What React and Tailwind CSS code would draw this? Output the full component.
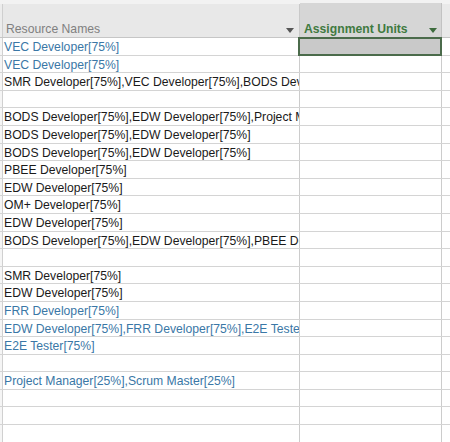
const rows = [
  { t: "VEC Developer[75%]", b: true },
  { t: "VEC Developer[75%]", b: true },
  { t: "SMR Developer[75%],VEC Developer[75%],BODS Developer[75%]" },
  { t: "" },
  { t: "BODS Developer[75%],EDW Developer[75%],Project Manager[25%]" },
  { t: "BODS Developer[75%],EDW Developer[75%]" },
  { t: "BODS Developer[75%],EDW Developer[75%]" },
  { t: "PBEE Developer[75%]" },
  { t: "EDW Developer[75%]" },
  { t: "OM+ Developer[75%]" },
  { t: "EDW Developer[75%]" },
  { t: "BODS Developer[75%],EDW Developer[75%],PBEE Developer[75%]" },
  { t: "" },
  { t: "SMR Developer[75%]" },
  { t: "EDW Developer[75%]" },
  { t: "FRR Developer[75%]", b: true },
  { t: "EDW Developer[75%],FRR Developer[75%],E2E Tester[75%]", b: true },
  { t: "E2E Tester[75%]", b: true },
  { t: "" },
  { t: "Project Manager[25%],Scrum Master[25%]", b: true },
  { t: "" },
  { t: "" },
  { t: "" },
];

function Tri({ color }) {
  return (
    <svg width="8" height="5" viewBox="0 0 8 5" className="shrink-0">
      <polygon points="0,0 8,0 4,5" fill={color} />
    </svg>
  );
}

export default function App() {
  return (
    <div
      className="w-[450px] h-[442px] overflow-hidden bg-white text-[12.2px]"
      style={{ fontFamily: '"Liberation Sans", Arial, sans-serif' }}
    >
      <div className="grid grid-cols-[3px_297px_142px_1fr] h-[38px] bg-[#f2f2f2] border-b border-[#c6c6c6]">
        <div className="border-r border-[#cfcfcf] bg-[#ececec] mt-[4px]" />
        <div className="flex items-end justify-between bg-[#e8e8e8] mt-[4px] pl-[3px] pr-[5px] pb-[1px] border-r border-[#c9c9c9]">
          <span className="text-[#808080] leading-[14px]">Resource Names</span>
          <div className="mb-[3px]"><Tri color="#555555" /></div>
        </div>
        <div className="flex items-end justify-between bg-[#d6d6d6] mt-[3px] pl-[4px] pr-[4px] pb-[1px] border-r border-[#c2c2c2]">
          <span className="text-[#3f7a3f] font-bold leading-[14px]">Assignment Units</span>
          <div className="mb-[3px]"><Tri color="#3d6b3d" /></div>
        </div>
        <div className="bg-[#e9e9e9] mt-[4px]" />
      </div>
      {rows.map((r, i) => (
        <div
          key={i}
          className="grid grid-cols-[3px_297px_142px_1fr] h-[17.6px] border-b border-[#d4d4d4]"
        >
          <div className="border-r border-[#d0d0d0] bg-[#f5f5f5]" />
          <div className="border-r border-[#cccccc] overflow-hidden whitespace-nowrap pl-[1px] pt-[2px] leading-[14px]">
            <span className={r.b ? "text-[#3a77a6]" : "text-[#1a1a1a]"}>{r.t}</span>
          </div>
          <div className="border-r border-[#cccccc] relative">
            {i === 0 && (
              <div className="absolute left-[-2px] right-[-1px] top-[-1px] bottom-[-1px] bg-[#c9c9c9] border-2 border-[#4b6b4b]" />
            )}
          </div>
          <div />
        </div>
      ))}
    </div>
  );
}
